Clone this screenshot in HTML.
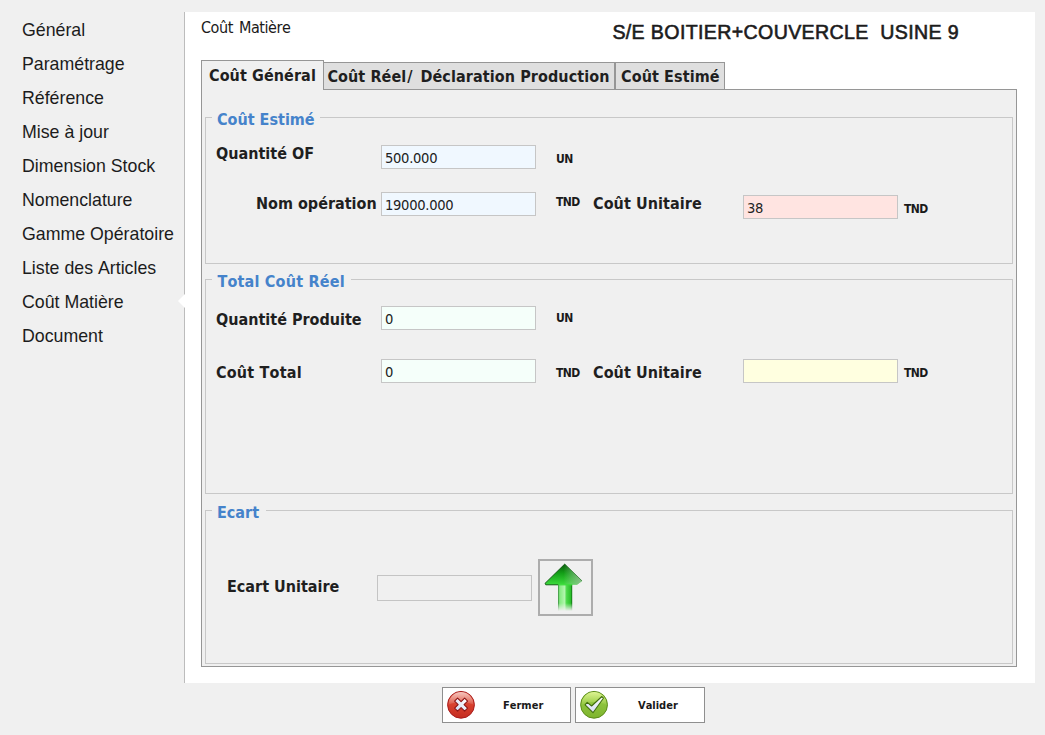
<!DOCTYPE html>
<html lang="fr">
<head>
<meta charset="utf-8">
<title>Coût Matière</title>
<style>
html,body{margin:0;padding:0;}
body{font-kerning:none;width:1045px;height:735px;background:#f0f0f0;position:relative;overflow:hidden;font-family:"DejaVu Sans Condensed","DejaVu Sans","Liberation Sans",sans-serif;color:#1b1b1b;}
.abs{position:absolute;}
.t{position:absolute;white-space:nowrap;line-height:1;}
.side{font-family:"Liberation Sans",sans-serif;font-size:17.75px;left:22px;color:#1c1c1c;}
.b16{font-weight:bold;font-size:16px;color:#1f1f1f;}
.blue{color:#4583cb;}
.unit{font-weight:bold;font-size:12px;letter-spacing:-0.6px;color:#1a1a1a;}
.inp{position:absolute;box-sizing:border-box;border:1px solid #c6c6c6;width:155px;height:24px;font-size:14.6px;letter-spacing:-0.3px;line-height:1;color:#222;}
.inp span{position:absolute;left:3px;top:5px;white-space:nowrap;}
.grp{position:absolute;box-sizing:border-box;border:1px solid #c8c8c8;}
.gt{position:absolute;background:#f0f0f0;height:3px;top:-1px;}
.btn{position:absolute;box-sizing:border-box;border:1px solid #8f8f8f;background:#fff;height:36px;top:687px;}
.btn .t{font-weight:bold;font-size:11px;color:#1a1a1a;}
</style>
</head>
<body>
<!-- sidebar -->
<div class="t side" style="top:22px">Général</div>
<div class="t side" style="top:56px">Paramétrage</div>
<div class="t side" style="top:90px">Référence</div>
<div class="t side" style="top:124px">Mise à jour</div>
<div class="t side" style="top:158px">Dimension Stock</div>
<div class="t side" style="top:192px">Nomenclature</div>
<div class="t side" style="top:226px">Gamme Opératoire</div>
<div class="t side" style="top:260px">Liste des Articles</div>
<div class="t side" style="top:294px">Coût Matière</div>
<div class="t side" style="top:328px">Document</div>

<!-- white panel -->
<div class="abs" style="left:184px;top:12px;width:1px;height:671px;background:#bcbcbc"></div>
<div class="abs" style="left:185px;top:12px;width:850px;height:671px;background:#fff"></div>
<svg class="abs" style="left:176px;top:292.4px" width="10" height="18" viewBox="0 0 10 18"><polygon points="2,9 9.5,1.5 9.5,16.5" fill="#fff"/></svg>

<div class="t" style="left:201px;top:20px;font-size:16px;letter-spacing:-0.45px;word-spacing:2px;color:#1a1a1a">Coût Matière</div>
<div class="t" style="left:612.4px;top:23px;font-family:'Liberation Sans',sans-serif;font-size:19.6px;letter-spacing:0.36px;-webkit-text-stroke:0.6px #1c1c1c;color:#1c1c1c;white-space:pre">S/E BOITIER+COUVERCLE  USINE 9</div>

<!-- tabs -->
<div class="abs" style="left:323px;top:62px;width:292px;height:28px;box-sizing:border-box;border:1px solid #969696;background:#dfdfdf"></div>
<div class="abs" style="left:615px;top:62px;width:110px;height:28px;box-sizing:border-box;border:1px solid #969696;background:#dfdfdf"></div>
<!-- tab content -->
<div class="abs" style="left:201px;top:89px;width:816px;height:578px;box-sizing:border-box;border:1px solid #969696;background:#f0f0f0"></div>
<!-- active tab -->
<div class="abs" style="left:201px;top:60px;width:123px;height:30px;box-sizing:border-box;border:1px solid #969696;border-bottom:none;background:#f0f0f0"></div>
<div class="t b16" style="left:209px;top:68px;letter-spacing:0.08px">Coût Général</div>
<div class="t b16" style="left:327.4px;top:69px;letter-spacing:0.09px">Coût Réel<span style="margin:0 2.6px 0 1px">/</span> Déclaration Production</div>
<div class="t b16" style="left:621px;top:69px;letter-spacing:0.1px">Coût Estimé</div>

<!-- group 1 -->
<div class="grp" style="left:205px;top:117px;width:808px;height:147px">
  <div class="gt" style="left:6px;width:108px"></div>
</div>
<div class="t b16 blue" style="left:217px;top:112px">Coût Estimé</div>
<div class="t b16" style="left:216px;top:146px">Quantité OF</div>
<div class="inp" style="left:381px;top:145px;background:#f0f8ff"><span>500.000</span></div>
<div class="t unit" style="left:556px;top:153px">UN</div>
<div class="t b16" style="left:256px;top:196px">Nom opération</div>
<div class="inp" style="left:381px;top:192px;background:#f0f8ff"><span>19000.000</span></div>
<div class="t unit" style="left:556px;top:196px">TND</div>
<div class="t b16" style="left:593px;top:196px;letter-spacing:0.08px">Coût Unitaire</div>
<div class="inp" style="left:743px;top:195px;background:#ffe4e1"><span>38</span></div>
<div class="t unit" style="left:904px;top:203px">TND</div>

<!-- group 2 -->
<div class="grp" style="left:205px;top:279px;width:808px;height:215px">
  <div class="gt" style="left:6px;width:139px"></div>
</div>
<div class="t b16 blue" style="left:217.4px;top:274px;letter-spacing:0.2px">Total Coût Réel</div>
<div class="t b16" style="left:216px;top:312px">Quantité Produite</div>
<div class="inp" style="left:381px;top:306px;background:#f5fffa"><span>0</span></div>
<div class="t unit" style="left:556px;top:312px">UN</div>
<div class="t b16" style="left:216px;top:365px;letter-spacing:0.2px">Coût Total</div>
<div class="inp" style="left:381px;top:359px;background:#f5fffa"><span>0</span></div>
<div class="t unit" style="left:556px;top:367px">TND</div>
<div class="t b16" style="left:593px;top:365px;letter-spacing:0.08px">Coût Unitaire</div>
<div class="inp" style="left:743px;top:359px;background:#ffffe0"></div>
<div class="t unit" style="left:904px;top:367px">TND</div>

<!-- group 3 -->
<div class="grp" style="left:205px;top:510px;width:808px;height:154px">
  <div class="gt" style="left:6px;width:54px"></div>
</div>
<div class="t b16 blue" style="left:217px;top:505px">Ecart</div>
<div class="t b16" style="left:227px;top:579px">Ecart Unitaire</div>
<div class="inp" style="left:377px;top:575px;height:26px;background:#f0f0f0;border-color:#c4c4c4"></div>
<div class="abs" style="left:538px;top:559px;width:55px;height:57px;box-sizing:border-box;border:2px solid #adadad;background:#f0f0f0">
<svg class="abs" style="left:0;top:0" width="51" height="53" viewBox="0 0 51 53">
<defs>
<linearGradient id="ah" x1="0" y1="0" x2="0" y2="1"><stop offset="0" stop-color="#075c0a"/><stop offset="0.45" stop-color="#14a018"/><stop offset="1" stop-color="#3ddc3d"/></linearGradient>
<linearGradient id="ar" x1="0" y1="0" x2="1" y2="0"><stop offset="0.5" stop-color="#b4c4b4" stop-opacity="0"/><stop offset="1" stop-color="#a8b8a8" stop-opacity="0.75"/></linearGradient>
<linearGradient id="as" x1="0" y1="0" x2="1" y2="0"><stop offset="0" stop-color="#0a7a0e"/><stop offset="0.1" stop-color="#84ea80"/><stop offset="0.45" stop-color="#b0f6ac"/><stop offset="0.6" stop-color="#4cd84a"/><stop offset="0.88" stop-color="#2cc02c"/><stop offset="1" stop-color="#0a6a0e"/></linearGradient>
<linearGradient id="af" x1="0" y1="0" x2="0" y2="1"><stop offset="0" stop-color="#fff"/><stop offset="0.72" stop-color="#fff"/><stop offset="1" stop-color="#000"/></linearGradient>
<mask id="am"><rect x="0" y="22" width="51" height="28" fill="url(#af)"/></mask>
</defs>
<rect x="18.2" y="22" width="14" height="28" fill="url(#as)" mask="url(#am)"/>
<path d="M24.8 3 L42 19.9 L37 23.8 L5.8 23.8 L5 22.4 Z" fill="url(#ah)"/>
<path d="M24.8 3 L42 19.9 L37 23.8 L5.8 23.8 L5 22.4 Z" fill="url(#ar)"/>
<path d="M32.2 23.8 L18.2 23.8" stroke="#3ddc3d" stroke-width="1.2"/>
<path d="M24.8 3 L5 22.4 L5.8 23.8 L18.2 23.8" fill="none" stroke="#064f08" stroke-width="0.9"/>
<path d="M24.8 3 L42 19.9" fill="none" stroke="#0a5a0c" stroke-width="0.7" stroke-opacity="0.8"/>
</svg>
</div>

<!-- buttons -->
<div class="btn" style="left:442px;width:129px">
  <svg class="abs" style="left:3px;top:2px" width="30" height="30" viewBox="0 0 30 30">
    <defs>
      <linearGradient id="rg" x1="0" y1="0" x2="0" y2="1"><stop offset="0" stop-color="#e8705c"/><stop offset="0.5" stop-color="#d8402e"/><stop offset="1" stop-color="#c42c20"/></linearGradient>
      <linearGradient id="rh" x1="0" y1="0" x2="0" y2="1"><stop offset="0" stop-color="#fff" stop-opacity="0.6"/><stop offset="1" stop-color="#fff" stop-opacity="0.1"/></linearGradient>
      <linearGradient id="xg" x1="0" y1="0" x2="0" y2="1"><stop offset="0" stop-color="#ffffff"/><stop offset="1" stop-color="#d4dcf2"/></linearGradient>
    </defs>
    <circle cx="15" cy="14.8" r="13.4" fill="url(#rg)" stroke="#a81c1c" stroke-width="1"/>
    <path d="M2.6 14.4 A12.4 12.4 0 0 1 27.4 14.4 Q15 9.5 2.6 14.4 Z" fill="url(#rh)"/>
    <g transform="translate(15.1 14.7) rotate(45)">
      <path d="M-2.1 -7.1 H2.1 V-2.1 H7.1 V2.1 H2.1 V7.1 H-2.1 V2.1 H-7.1 V-2.1 H-2.1 Z" fill="url(#xg)" stroke="#8e1414" stroke-width="1.1" stroke-linejoin="round"/>
    </g>
  </svg>
  <div class="t" style="left:60px;top:12px">Fermer</div>
</div>
<div class="btn" style="left:575px;width:130px">
  <svg class="abs" style="left:3px;top:2px" width="30" height="30" viewBox="0 0 30 30">
    <defs>
      <linearGradient id="gg" x1="0" y1="0" x2="0" y2="1"><stop offset="0" stop-color="#a8d850"/><stop offset="0.5" stop-color="#8cc23c"/><stop offset="1" stop-color="#7eb42e"/></linearGradient>
      <linearGradient id="gh" x1="0" y1="0" x2="0" y2="1"><stop offset="0" stop-color="#f4ffb0" stop-opacity="0.7"/><stop offset="1" stop-color="#e0f890" stop-opacity="0.1"/></linearGradient>
    </defs>
    <circle cx="15.05" cy="14.8" r="13.4" fill="url(#gg)" stroke="#5c8c1a" stroke-width="1"/>
    <path d="M2.65 14.4 A12.4 12.4 0 0 1 27.45 14.4 Q15 9.5 2.65 14.4 Z" fill="url(#gh)"/>
    <path d="M8.2 12.4 L12.6 16 L22.9 6.5 L24.4 8.2 L14 22.7 L6.1 14.8 Z" fill="url(#xg)" stroke="#3f6c0c" stroke-width="1.05" stroke-linejoin="round"/>
  </svg>
  <div class="t" style="left:62px;top:12px">Valider</div>
</div>
</body>
</html>
